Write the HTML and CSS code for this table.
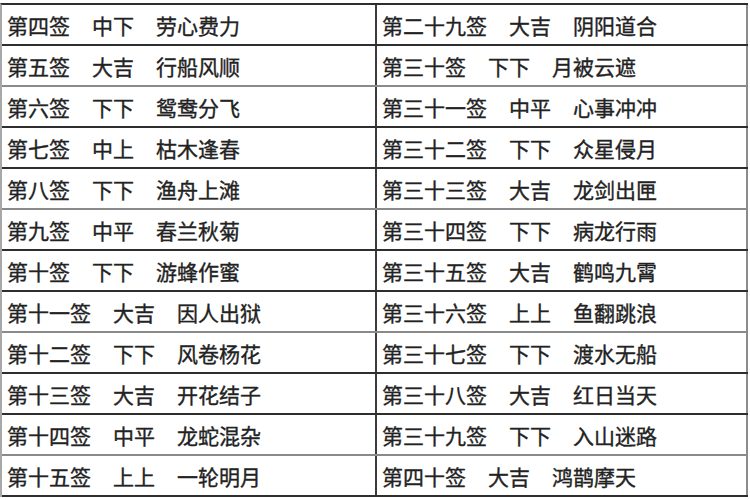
FILE: index.html
```html
<!DOCTYPE html>
<html lang="zh-CN">
<head>
<meta charset="utf-8">
<title>签文表</title>
<link rel="stylesheet" href="styles.css">
</head>
<body>
<div class="sheet">
  <div class="row"><div class="cell"><span>第四签</span><span>中下</span><span>劳心费力</span></div><div class="cell"><span>第二十九签</span><span>大吉</span><span>阴阳道合</span></div></div>
  <div class="row light"><div class="cell"><span>第五签</span><span>大吉</span><span>行船风顺</span></div><div class="cell"><span>第三十签</span><span>下下</span><span>月被云遮</span></div></div>
  <div class="row"><div class="cell"><span>第六签</span><span>下下</span><span>鸳鸯分飞</span></div><div class="cell"><span>第三十一签</span><span>中平</span><span>心事冲冲</span></div></div>
  <div class="row"><div class="cell"><span>第七签</span><span>中上</span><span>枯木逢春</span></div><div class="cell"><span>第三十二签</span><span>下下</span><span>众星侵月</span></div></div>
  <div class="row light"><div class="cell"><span>第八签</span><span>下下</span><span>渔舟上滩</span></div><div class="cell"><span>第三十三签</span><span>大吉</span><span>龙剑出匣</span></div></div>
  <div class="row"><div class="cell"><span>第九签</span><span>中平</span><span>春兰秋菊</span></div><div class="cell"><span>第三十四签</span><span>下下</span><span>病龙行雨</span></div></div>
  <div class="row"><div class="cell"><span>第十签</span><span>下下</span><span>游蜂作蜜</span></div><div class="cell"><span>第三十五签</span><span>大吉</span><span>鹤鸣九霄</span></div></div>
  <div class="row light"><div class="cell"><span>第十一签</span><span>大吉</span><span>因人出狱</span></div><div class="cell"><span>第三十六签</span><span>上上</span><span>鱼翻跳浪</span></div></div>
  <div class="row"><div class="cell"><span>第十二签</span><span>下下</span><span>风卷杨花</span></div><div class="cell"><span>第三十七签</span><span>下下</span><span>渡水无船</span></div></div>
  <div class="row"><div class="cell"><span>第十三签</span><span>大吉</span><span>开花结子</span></div><div class="cell"><span>第三十八签</span><span>大吉</span><span>红日当天</span></div></div>
  <div class="row light"><div class="cell"><span>第十四签</span><span>中平</span><span>龙蛇混杂</span></div><div class="cell"><span>第三十九签</span><span>下下</span><span>入山迷路</span></div></div>
  <div class="row"><div class="cell"><span>第十五签</span><span>上上</span><span>一轮明月</span></div><div class="cell"><span>第四十签</span><span>大吉</span><span>鸿鹊摩天</span></div></div>
</div>
</body>
</html>
```

FILE: styles.css
```css
html, body {
  margin: 0;
  padding: 0;
  background: #ffffff;
}
body {
  width: 750px;
  height: 500px;
  overflow: hidden;
  font-family: "Noto Sans CJK SC", "Noto Sans", sans-serif;
}
.sheet {
  margin-top: 3px;
  width: 748px;
  border-top: 2px solid #2e2e2e;
  border-left: 2px solid #a8a8a8;
  box-sizing: border-box;
}
.row {
  display: grid;
  grid-template-columns: 375px 371px;
  height: 41px;
  box-sizing: border-box;
  border-bottom: 2px solid #2e2e2e;
}
.row.light {
  border-bottom-color: #8a8a8a;
}
.cell {
  display: flex;
  align-items: center;
  gap: 22px;
  padding-left: 5px;
  font-size: 21px;
  color: #222222;
  -webkit-text-stroke: 0.35px #222222;
  white-space: nowrap;
  box-sizing: border-box;
}
.cell:first-child {
  border-right: 2px solid #3a3a3a;
}
.cell:last-child {
  border-right: 2px solid #8c8c8c;
}
```
